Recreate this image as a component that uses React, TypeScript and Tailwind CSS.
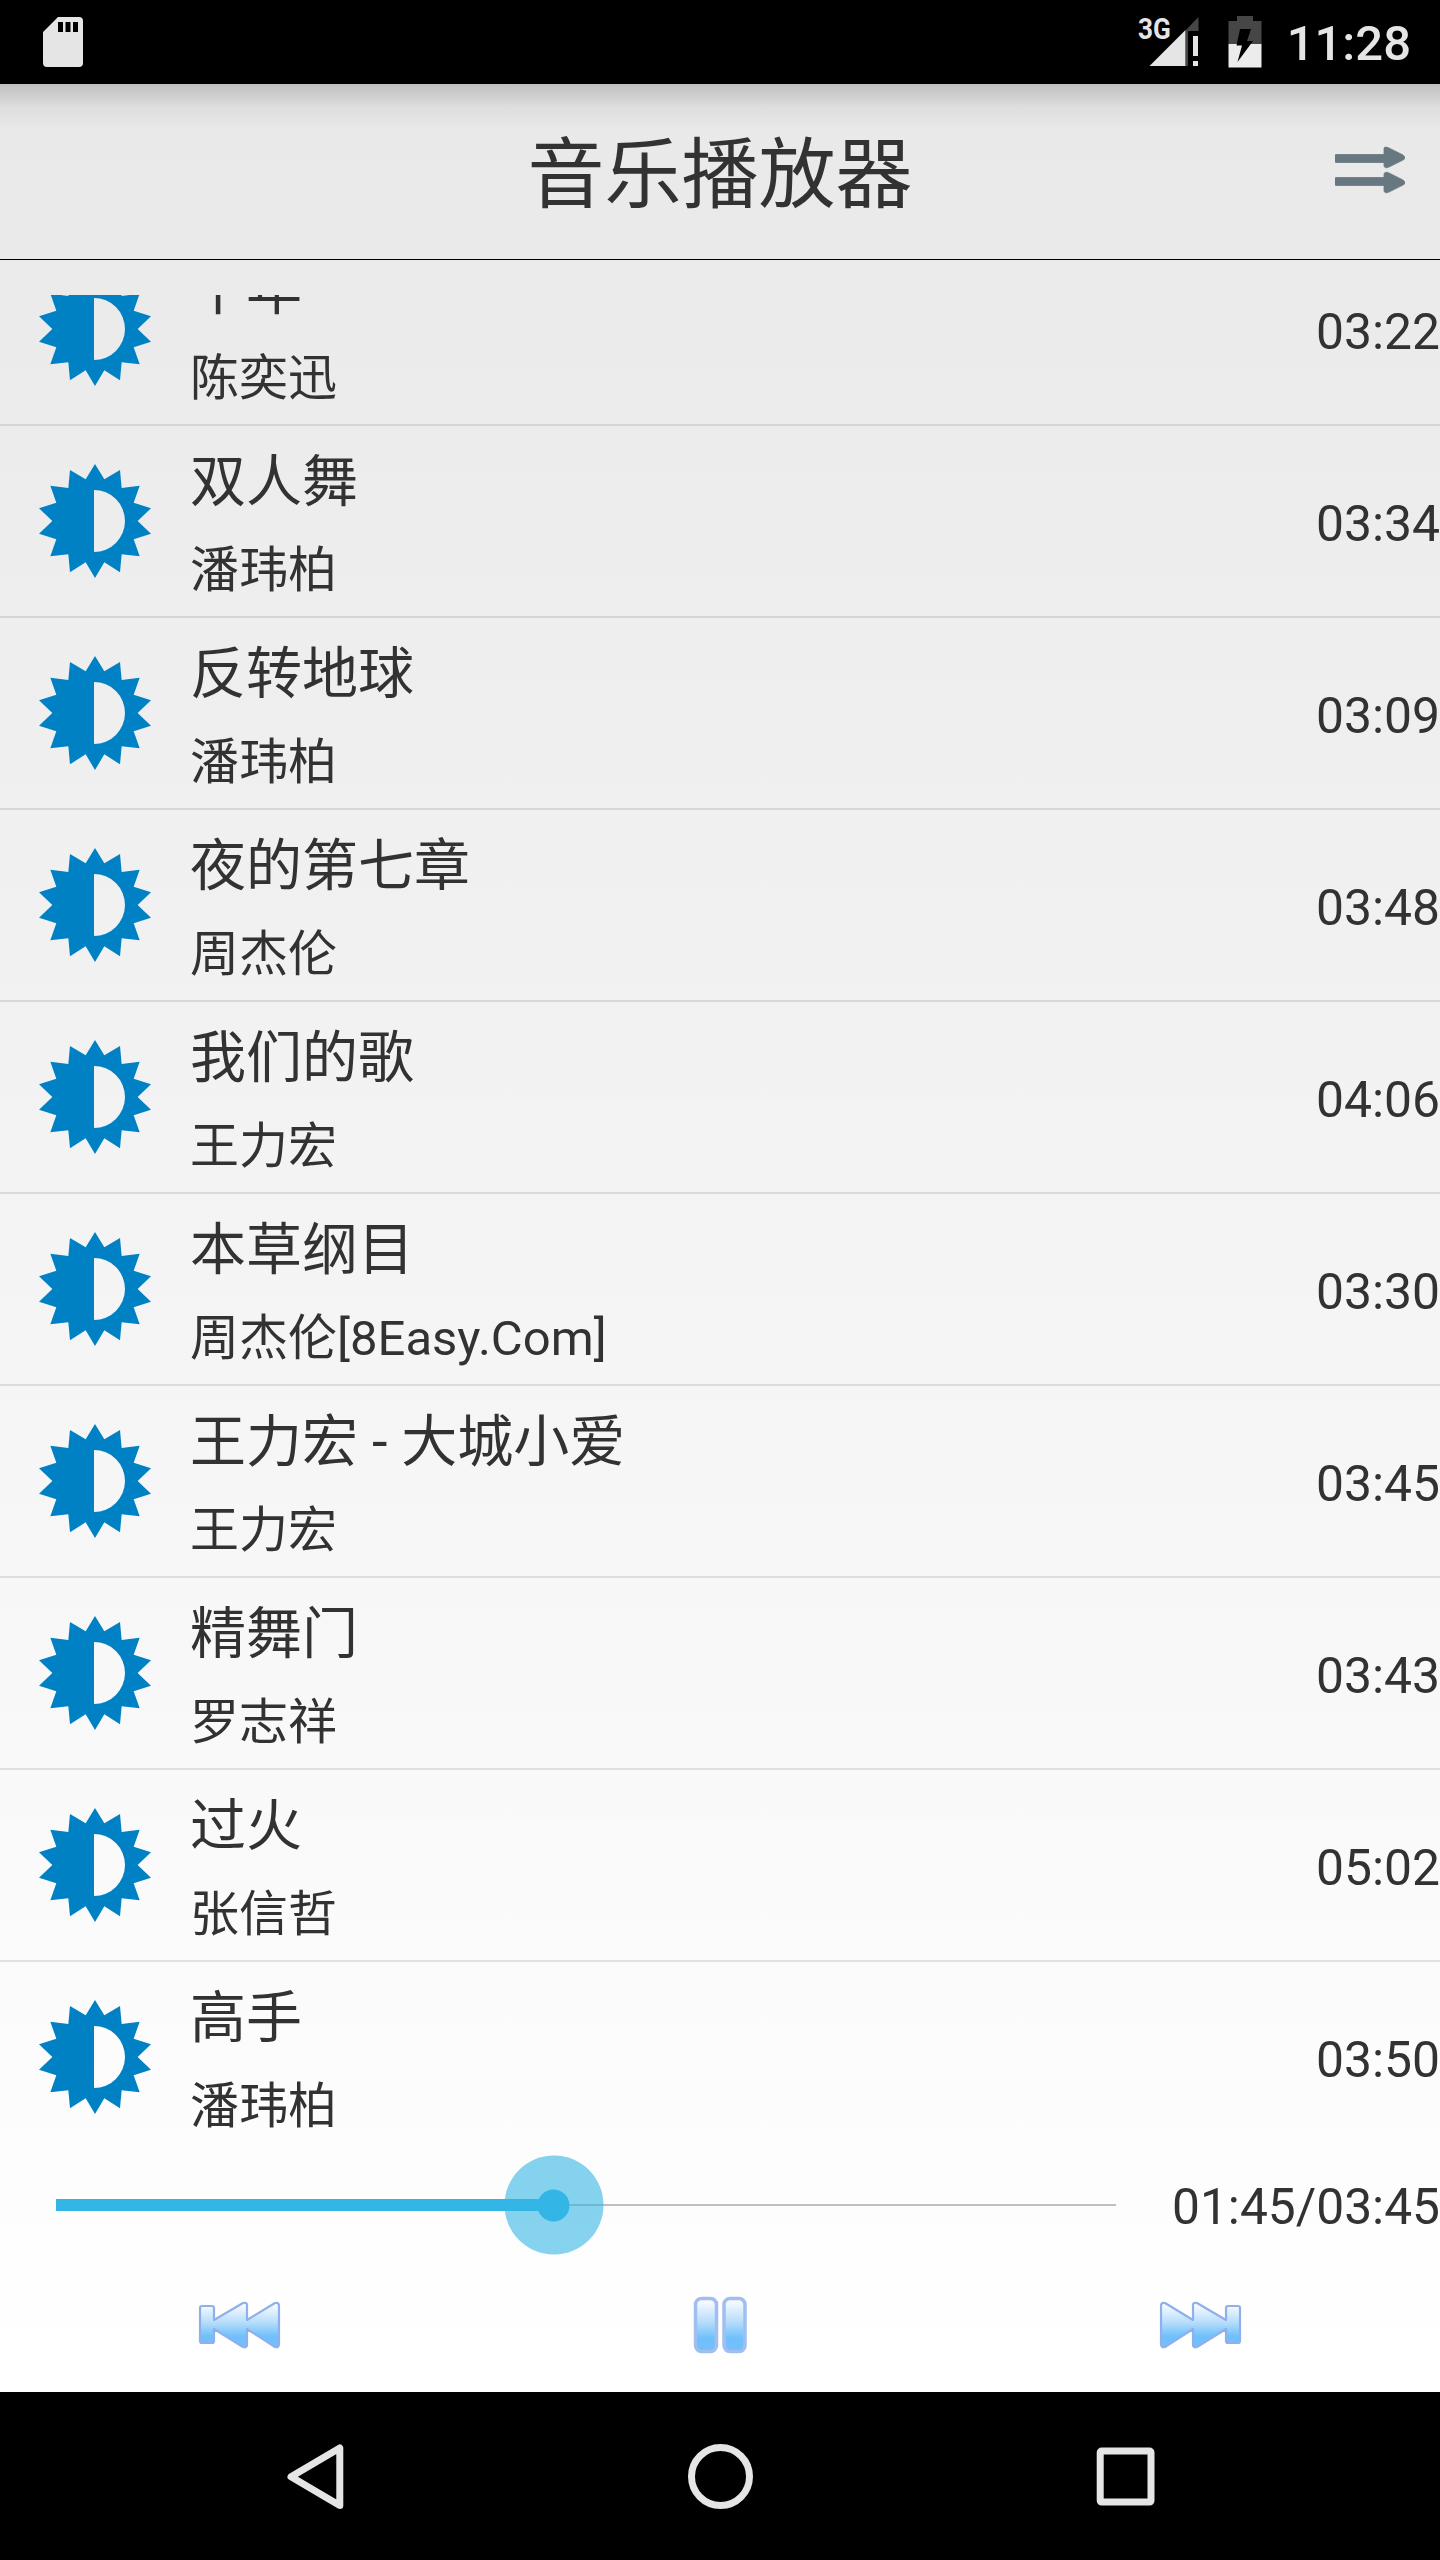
import React, { useState } from 'react';

interface Song {
  title: string;
  artist: string;
  duration: string;
}

const songs: Song[] = [
  { title: '十年', artist: '陈奕迅', duration: '03:22' },
  { title: '双人舞', artist: '潘玮柏', duration: '03:34' },
  { title: '反转地球', artist: '潘玮柏', duration: '03:09' },
  { title: '夜的第七章', artist: '周杰伦', duration: '03:48' },
  { title: '我们的歌', artist: '王力宏', duration: '04:06' },
  { title: '本草纲目', artist: '周杰伦[8Easy.Com]', duration: '03:30' },
  { title: '王力宏 - 大城小爱', artist: '王力宏', duration: '03:45' },
  { title: '精舞门', artist: '罗志祥', duration: '03:43' },
  { title: '过火', artist: '张信哲', duration: '05:02' },
  { title: '高手', artist: '潘玮柏', duration: '03:50' }
];

const SunIcon: React.FC = () => (
  <svg width="114" height="116" viewBox="-171 -174 342 348">
    <path
      fill="#0081c4"
      fillRule="evenodd"
      d="M0-171 28-125 75-153 80-99 134-106 116-55 168-38 128 0 168 38 116 55 134 106 80 100 75 154 28 124 0 171-28 124-75 154-80 100-134 106-116 55-168 38-128 0-168-38-116-55-134-106-80-99-75-153-28-125ZM-3-93V93A93 93 0 0 0-3-93Z"
    />
  </svg>
);

const StatusBar: React.FC = () => (
  <div className="flex h-[84px] shrink-0 items-center justify-between bg-black pl-[43px] pr-[29px]">
    <svg width="40" height="50" viewBox="0 0 40 50">
      <path
        fill="#e5e5e5"
        fillRule="evenodd"
        d="M15 0H36Q40 0 40 4V46Q40 50 36 50H4Q0 50 0 46V15ZM15 5V15H20V5ZM22.500 5V15H27.500V5ZM30 5V15H35V5Z"
      />
    </svg>
    <div className="flex items-center">
      <div className="relative h-[50px] w-[62px]">
        <span className="absolute left-0 top-[-3px] origin-left scale-x-[0.87] text-[30px] font-bold leading-[30px] text-[#e5e5e5]">3G</span>
        <svg className="absolute left-0 top-0" width="62" height="50" viewBox="0 0 62 50">
          <path fill="#464646" d="M60.500 0V14H50V49H48V13Z" />
          <path fill="#e5e5e5" d="M47.500 13V49H11.500ZM55 19H60V39H55ZM55 44H60V49H55Z" />
        </svg>
      </div>
      <svg className="ml-7" width="34" height="52" viewBox="0 0 34 52">
        <path fill="#464646" d="M9 0H25V5H33.500V28H.5V5H9Z" />
        <path fill="#ececec" d="M.5 28H33.500V51.500H.5Z" />
        <path fill="#000" d="M12 13H23L19 25H25L9.500 46 14 29.500H8.500Z" />
      </svg>
      <span className="ml-[25px] mt-1 text-[49px] font-medium leading-[60px] text-[#e5e5e5]">11:28</span>
    </div>
  </div>
);

const Header: React.FC = () => (
  <header className="relative h-[176px] shrink-0 border-b border-black">
    <div className="absolute inset-x-0 top-0 h-[46px] bg-linear-to-b from-black/18 via-black/5 via-50% to-transparent" />
    <h1 className="pt-[47px] text-center text-[77px] leading-[90px]">音乐播放器</h1>
    <button className="absolute right-[35px] top-[62px]">
      <svg width="70" height="48" viewBox="0 0 70 48">
        <g fill="#677880" stroke="#677880" strokeWidth="0.8">
          <path d="M0 9.500Q0 8.500 1 8.500H49V2Q50 0 54 2L68 9Q72 12 68 14L54 21Q50 23 49 20V16.500H1Q0 16.500 0 15.500Z" />
          <path d="M0 32.500Q0 31.500 1 31.500H49V28Q50 25 54 27L68 34Q72 37 68 39L54 46Q50 48 49 45V39.500H1Q0 39.500 0 38.500Z" />
        </g>
      </svg>
    </button>
  </header>
);

const SongRow: React.FC<{ song: Song }> = ({ song }) => (
  <li className="flex h-48 shrink-0 items-center border-b-2 border-black/10 last:border-transparent">
    <div className="flex h-full w-[190px] items-center justify-center">
      <SunIcon />
    </div>
    <div className="flex h-full flex-1 flex-col pt-[18px]">
      <p className="text-[56px] leading-[76px]">{song.title}</p>
      <p className="mt-[18px] text-[49px] leading-[66px]">{song.artist}</p>
    </div>
    <span className="mt-1.5 text-[49.8px] leading-[58px]">{song.duration}</span>
  </li>
);

const SeekBar: React.FC<{ elapsed: number; total: number }> = ({ elapsed, total }) => {
  const format = (s: number) => `${String(Math.floor(s / 60)).padStart(2, '0')}:${String(s % 60).padStart(2, '0')}`;
  const percent = `${(elapsed / total) * 100 + 0.3}%`;

  return (
    <div className="flex h-[102px] shrink-0 items-center">
      <div className="flex-1 px-14">
        <div className="relative flex h-3 items-center">
          <div className="h-0.5 w-full bg-[#bfbfbf]" />
          <div className="absolute left-0 top-0 h-3 bg-[#33b5e5]" style={{ width: percent }} />
          <div
            className="absolute top-1/2 flex size-[99px] -translate-x-1/2 -translate-y-1/2 items-center justify-center rounded-full bg-[#33b5e5]/60"
            style={{ left: percent }}
          >
            <div className="size-8 rounded-full bg-[#33b5e5]" />
          </div>
        </div>
      </div>
      <span className="mt-1 text-[49.7px] leading-[58px]">{format(elapsed)}/{format(total)}</span>
    </div>
  );
};

const Gloss: React.FC<{ id: string }> = ({ id }) => (
  <defs>
    <linearGradient id={id} x1="0" y1="0" x2="0" y2="1">
      <stop offset="0.08" stopColor="#f3f9ff" />
      <stop offset="0.45" stopColor="#b5dcfb" />
      <stop offset="0.75" stopColor="#6fc0fc" />
      <stop offset="1" stopColor="#74bffb" />
    </linearGradient>
  </defs>
);

const SkipIcon: React.FC<{ id: string; className?: string }> = ({ id, className }) => (
  <svg className={className} width="84" height="50" viewBox="0 0 84 50">
    <Gloss id={id} />
    <path
      fill={`url(#${id})`}
      stroke="#8fb0ea"
      strokeWidth="2.200"
      strokeLinejoin="round"
      d="M4 6H14Q16 6 16 8V20L45 3Q49 2 49 5V20L77 3Q81 2 81 6V44Q81 48 77 47L49 29V45Q49 48 45 47L16 29V41Q16 43 14 43H4Q2 43 2 41V8Q2 6 4 6Z"
    />
  </svg>
);

const Controls: React.FC = () => {
  const [playing, setPlaying] = useState(true);

  return (
    <div className="grid flex-1 grid-cols-3 place-items-center pt-px">
      <button><SkipIcon id="prev" /></button>
      <button onClick={() => setPlaying(!playing)}>
        <svg width="56" height="58" viewBox="0 0 56 58">
          <Gloss id="pause" />
          <g fill="url(#pause)" stroke="#a2beee" strokeWidth="3.500" strokeLinejoin="round">
            {playing ? (
              <>
                <rect x="3.500" y="2.500" width="21" height="53" rx="6" />
                <rect x="32" y="2.500" width="21" height="53" rx="6" />
              </>
            ) : (
              <path d="M6 4 52 29 6 54Z" />
            )}
          </g>
        </svg>
      </button>
      <button><SkipIcon id="next" className="-scale-x-100" /></button>
    </div>
  );
};

const NavBar: React.FC = () => (
  <nav className="flex h-[168px] shrink-0 items-center justify-center gap-[335px] bg-black">
    <svg width="70" height="70" viewBox="0 0 70 70" fill="none" stroke="#e5e5e5" strokeWidth="7" strokeLinejoin="round">
      <path d="M59.800 7V64.500L11 35.700Z" />
    </svg>
    <svg width="70" height="70" viewBox="0 0 70 70" fill="none" stroke="#e5e5e5" strokeWidth="7">
      <circle cx="35.500" cy="35.500" r="29" />
    </svg>
    <svg width="70" height="70" viewBox="0 0 70 70" fill="none" stroke="#e5e5e5" strokeWidth="7">
      <rect x="10.200" y="10.100" width="50.800" height="51" rx="1.500" />
    </svg>
  </nav>
);

const App: React.FC = () => {
  return (
    <div className="flex h-[2560px] w-[1440px] flex-col overflow-hidden bg-linear-to-b from-[#e8e8e8] to-white to-93% font-['Roboto','Noto_Sans_CJK_SC',sans-serif] text-[#323232]">
      <StatusBar />
      <Header />
      {/* list is scrolled, so the rows hang from the bottom edge */}
      <ul className="mt-[35px] flex h-[1859px] shrink-0 flex-col justify-end overflow-hidden">
        {songs.map((song) => (
          <SongRow key={song.title} song={song} />
        ))}
      </ul>
      <SeekBar elapsed={105} total={225} />
      <Controls />
      <NavBar />
    </div>
  );
};

export default App;
